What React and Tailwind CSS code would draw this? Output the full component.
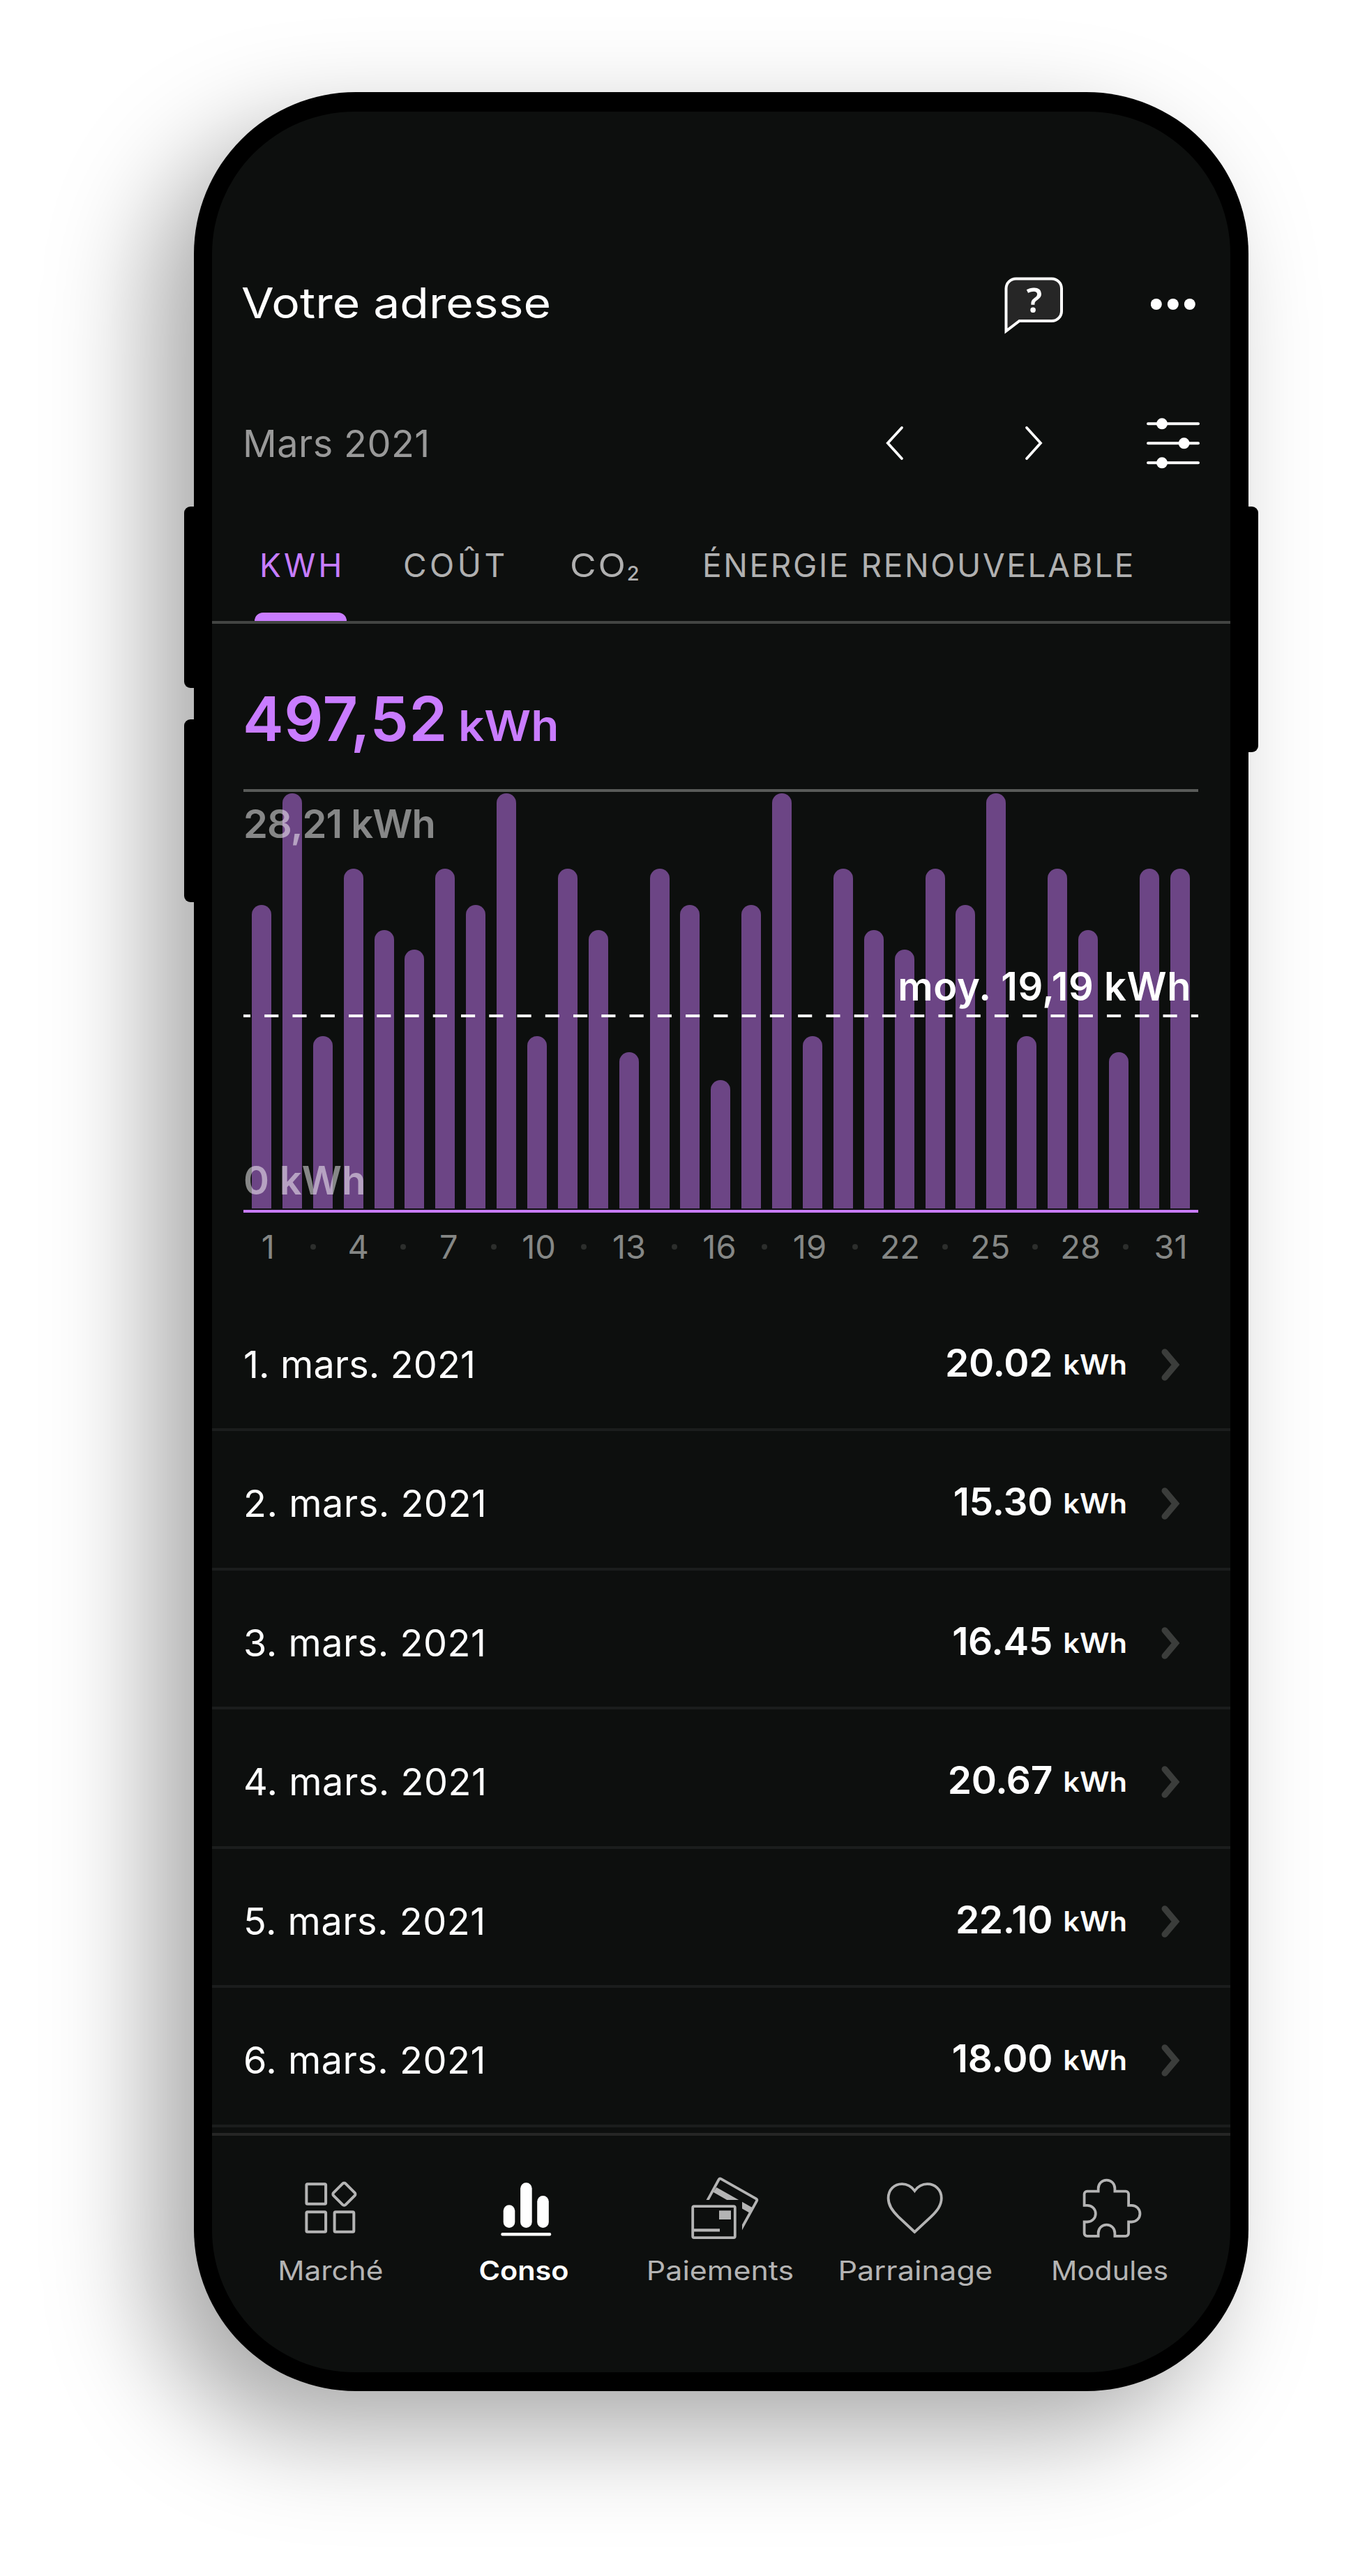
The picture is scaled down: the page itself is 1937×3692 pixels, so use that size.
import React from "react";

const bars = [
  435, 595, 247, 487, 399, 371, 487, 435, 595, 247, 487, 399, 224, 487, 435, 184,
  435, 595, 247, 487, 399, 371, 487, 435, 595, 247, 487, 399, 224, 487, 487,
];

const axis = [1, 0, 4, 0, 7, 0, 10, 0, 13, 0, 16, 0, 19, 0, 22, 0, 25, 0, 28, 0, 31];

const days = [
  { date: "1. mars. 2021", value: "20.02", track: "tracking-[0.1px]" },
  { date: "2. mars. 2021", value: "15.30", track: "tracking-[0.5px]" },
  { date: "3. mars. 2021", value: "16.45", track: "tracking-[0.5px]" },
  { date: "4. mars. 2021", value: "20.67", track: "tracking-[0.5px]" },
  { date: "5. mars. 2021", value: "22.10", track: "tracking-[0.5px]" },
  { date: "6. mars. 2021", value: "18.00", track: "tracking-[0.5px]" },
];

function HelpIcon() {
  return (
    <svg className="h-[96px] w-[88px]" viewBox="0 0 88 96">
      <path
        d="M4.5 88.5V27.5A14 14 0 0 1 18.5 13.5H70A14 14 0 0 1 84 27.5V60A14 14 0 0 1 70 74H23.5Z"
        fill="#262626"
        stroke="#fff"
        strokeWidth="4"
      />
      <text
        x="44.8"
        y="62"
        textAnchor="middle"
        fill="#fff"
        className="font-['Noto_Sans',sans-serif] text-[49px] font-semibold"
      >
        ?
      </text>
    </svg>
  );
}

function MoreIcon() {
  return (
    <svg className="h-[24px] w-[64px]" viewBox="0 0 64 24" fill="#fff">
      <circle cx="7.8" cy="14" r="8" />
      <circle cx="31.8" cy="14" r="8" />
      <circle cx="55.8" cy="14" r="8" />
    </svg>
  );
}

function Arrow({ d }) {
  return (
    <svg className="h-[56px] w-[32px]" viewBox="0 0 32 56" fill="none" stroke="#fff" strokeWidth="3.8" strokeLinecap="round">
      <path d={d} />
    </svg>
  );
}

function FilterIcon() {
  return (
    <svg className="h-[80px] w-[84px]" viewBox="0 0 84 80" fill="#fff" stroke="#fff">
      <path d="M6 11.3H78M6 39.3H78M6 67.3H78" strokeWidth="4" strokeLinecap="round" />
      <g stroke="none">
        <circle cx="26" cy="11.3" r="8" />
        <circle cx="57.6" cy="39.3" r="8" />
        <circle cx="26" cy="67.3" r="8" />
      </g>
    </svg>
  );
}

function MarketIcon() {
  return (
    <svg className="size-24" viewBox="0 0 96 96" fill="none" stroke="#b4b4b4" strokeWidth="4">
      <rect x="13.4" y="13.3" width="27.7" height="28.4" rx="1.5" />
      <rect x="13.4" y="53.3" width="27.7" height="28.4" rx="1.5" />
      <rect x="53.6" y="53.3" width="27.7" height="28.4" rx="1.5" />
      <rect x="55.2" y="15.5" width="24.4" height="24.4" rx="3" transform="rotate(45 67.4 27.7)" />
    </svg>
  );
}

function UsageIcon() {
  return (
    <svg className="size-24" viewBox="0 0 96 96" fill="#fff">
      <rect x="16.7" y="43.3" width="16.6" height="32.7" rx="8.3" />
      <rect x="41.1" y="11.3" width="16.6" height="64.7" rx="8.3" />
      <rect x="65.2" y="30" width="16.6" height="46" rx="8.3" />
      <rect x="13.3" y="83" width="71.9" height="4.6" rx="2" />
    </svg>
  );
}

function CardsIcon() {
  return (
    <svg className="size-24 overflow-visible" viewBox="0 0 96 96">
      <clipPath id="behind-card">
        <path d="M0 -4H110V96H80V36H0Z" />
      </clipPath>
      <g clipPath="url(#behind-card)">
        <path d="M28 41L46.6 6.8Q47.8 4.8 49.8 5.9L100.2 34.4Q102 35.6 100.9 37.6L78 79" fill="none" stroke="#b4b4b4" strokeWidth="3.8" />
        <path d="M43.3 18L95 47.3L91 54.8L38.5 24.8Z" fill="#b4b4b4" />
      </g>
      <rect x="9.2" y="45.2" width="60.6" height="44.9" rx="2" fill="#0d0f0e" stroke="#b4b4b4" strokeWidth="3.8" />
      <path d="M47 51.3H64V64H47ZM11 77.3H48V81.6H11Z" fill="#b4b4b4" />
    </svg>
  );
}

function HeartIcon() {
  return (
    <svg className="size-24" viewBox="0 0 96 96" fill="none" stroke="#b4b4b4" strokeWidth="3.8">
      <path d="M47.4 82L24 60.2C15.5 51.8 9.6 44 9.6 33.6C9.6 21 18.6 13.2 29.2 13.2C36.5 13.2 43 17 47.4 23C51.8 17 58.3 13.2 65.6 13.2C76.2 13.2 85.8 21 85.8 33.6C85.8 44 79.3 51.8 70.8 60.2Z" />
    </svg>
  );
}

function PuzzleIcon() {
  return (
    <svg className="size-24" viewBox="0 0 96 96" fill="none" stroke="#b4b4b4" strokeWidth="3.8">
      <path d="M15.6 23.6H31.7V19.4A11.85 11.85 0 0 1 55.4 19.4V23.6H71.1A4 4 0 0 1 75.1 27.6V43.8H79.6A11.85 11.85 0 0 1 79.6 67.5H75.1V83.8A4 4 0 0 1 71.1 87.8H55.4V83.4A11.85 11.85 0 0 0 31.7 83.4V87.8H15.6A4 4 0 0 1 11.6 83.8V67.5H16A11.85 11.85 0 0 0 16 43.8H11.6V27.6A4 4 0 0 1 15.6 23.6Z" />
    </svg>
  );
}

const tabs = [
  { label: "Marché", Icon: MarketIcon, text: "text-[#b4b4b4] scale-x-[1.116]" },
  { label: "Conso", Icon: UsageIcon, text: "text-white font-semibold scale-x-[1.09] pr-1" },
  { label: "Paiements", Icon: CardsIcon, text: "text-[#b4b4b4] scale-x-[1.13]" },
  { label: "Parrainage", Icon: HeartIcon, text: "text-[#b4b4b4] scale-x-[1.14]" },
  { label: "Modules", Icon: PuzzleIcon, text: "text-[#b4b4b4] scale-x-[1.09]" },
];

function Header() {
  return (
    <>
      <div className="mt-[200px] flex h-[147px] items-center pr-[50px] pl-[42px]">
        <h1 className="origin-left scale-x-[1.112] text-[61px] leading-[72px] text-white">Votre adresse</h1>
        <div className="ml-auto">
          <HelpIcon />
        </div>
        <div className="ml-[124px]">
          <MoreIcon />
        </div>
      </div>
      <div className="flex h-[257px] items-center pr-[40px] pl-[44px]">
        <span className="grow text-[54px] leading-[64px] tracking-[0.4px] text-[#999]">Mars 2021</span>
        <Arrow d="M27 5L6.8 27L27 49.2" />
        <div className="ml-[168px]">
          <Arrow d="M6 5L26 27L6 49.2" />
        </div>
        <div className="ml-[142px]">
          <FilterIcon />
        </div>
      </div>
    </>
  );
}

function UnitTabs() {
  return (
    <div className="flex h-[130px] border-b-4 border-[#434543] pl-[61px] text-[46px] leading-[92px] whitespace-nowrap text-[#b0b0b0]">
      <div className="flex w-[132px] flex-col">
        <span className="pl-[7px] tracking-[4px] text-[#c77dff]">KWH</span>
        <div className="mt-[22px] h-3 rounded-t-[12px] bg-[#c97cff]" />
      </div>
      <span className="ml-[81px] w-[239px] tracking-[4.5px]">COÛT</span>
      <div className="flex w-[190px]">
        <span className="origin-left scale-x-[1.12] tracking-[2.5px]">CO</span>
        <span className="ml-[8px] pt-[12px] text-[29px] font-medium">2</span>
      </div>
      <span className="tracking-[2.6px]">ÉNERGIE RENOUVELABLE</span>
    </div>
  );
}

function Chart() {
  return (
    <>
      <div className="flex h-[237px] items-baseline gap-[15px] pt-[86px] pl-[44px] font-semibold text-[#c97cff]">
        <span className="text-[88px] leading-[100px] tracking-[0.6px]">497,52</span>
        <span className="origin-left scale-x-[1.075] text-[61px] leading-[70px]">kWh</span>
      </div>
      <div className="relative mr-[46px] ml-[45px] flex h-[607px] items-end justify-between border-t-4 border-b-4 border-t-[#595b59] border-b-[#c97cff] px-[12px] pb-[2px] text-[56px] leading-[60px] font-semibold whitespace-nowrap">
        {bars.map((h, i) => (
          <div key={i} className="w-[28px] rounded-t-[14px] bg-[#6c4585]" style={{ height: h }} />
        ))}
        <span className="absolute top-[16px] left-0 tracking-[-0.95px] text-white/50">28,21 kWh</span>
        <span className="absolute top-[527px] left-0 tracking-[0.3px] text-white/50">0 kWh</span>
        <span className="absolute top-[249px] right-[10px] tracking-[0.57px] text-white">moy. 19,19 kWh</span>
        <svg className="absolute top-[319px] left-0 h-1 w-full" viewBox="0 0 1369 4" preserveAspectRatio="none">
          <path d="M0 2H1369" stroke="#fff" strokeWidth="4" strokeDasharray="20.13 20.13" strokeDashoffset="10.07" />
        </svg>
      </div>
      <div className="ml-[48px] grid h-[98px] w-[1359px] grid-cols-21 items-center justify-items-center text-[47px] leading-[56px] text-[#858785]">
        {axis.map((n, i) =>
          n ? <span key={i}>{n}</span> : <span key={i} className="size-2 rounded-full bg-[#2c2e2c]" />
        )}
      </div>
    </>
  );
}

function DayRow({ date, value, track }) {
  return (
    <div className="flex h-[199.46px] items-center border-b-4 border-[#1b1d1d] pt-[12px] pr-[68px] pl-[45px] text-white">
      <span className={"grow text-[54px] leading-[64px] " + track}>{date}</span>
      <span className="relative -top-[3px] flex items-baseline gap-[21px] font-semibold">
        <span className="text-[55px] leading-[64px] tracking-[-0.3px]">{value}</span>
        <span className="relative -top-[3px] origin-right scale-x-[1.067] text-[39px] leading-[48px]">kWh</span>
      </span>
      <svg className="ml-[44px] h-[52px] w-[36px]" viewBox="0 0 36 52" fill="none" stroke="#3b3d3b" strokeWidth="9" strokeLinecap="round">
        <path d="M10 7.7L25.5 26L10 44.3" />
      </svg>
    </div>
  );
}

export default function App() {
  return (
    <div className="h-[3692px] w-[1937px] overflow-hidden bg-white pt-[132px] pl-[278px] font-['Inter',sans-serif]">
      <div className="relative h-[3295px] w-[1512px] rounded-[232px] bg-black px-[26px] pt-[28px] pb-[27px] shadow-[-58px_58px_150px_rgba(0,0,0,0.34)]">
        <div className="absolute top-[594px] -left-[14px] h-[260px] w-[40px] rounded-l-[9px] bg-black" />
        <div className="absolute top-[899px] -left-[14px] h-[262px] w-[40px] rounded-l-[9px] bg-black" />
        <div className="absolute top-[594px] -right-[14px] h-[352px] w-[40px] rounded-r-[9px] bg-black" />
        <div className="relative flex h-full flex-col overflow-hidden rounded-[204px] bg-[#0d0f0e]">
          <Header />
          <UnitTabs />
          <Chart />
          <div className="mt-[16px] mb-[8px]">
            {days.map((d) => (
              <DayRow key={d.date} {...d} />
            ))}
          </div>
          <nav className="grid grow grid-cols-5 border-t-4 border-[#252625] pt-[56px] pr-[33px] pl-[30px]">
            {tabs.map(({ label, Icon, text }) => (
              <div key={label} className="flex flex-col items-center">
                <Icon />
                <span className={"mt-[18px] text-[38px] leading-[46px] " + text}>{label}</span>
              </div>
            ))}
          </nav>
        </div>
      </div>
    </div>
  );
}
